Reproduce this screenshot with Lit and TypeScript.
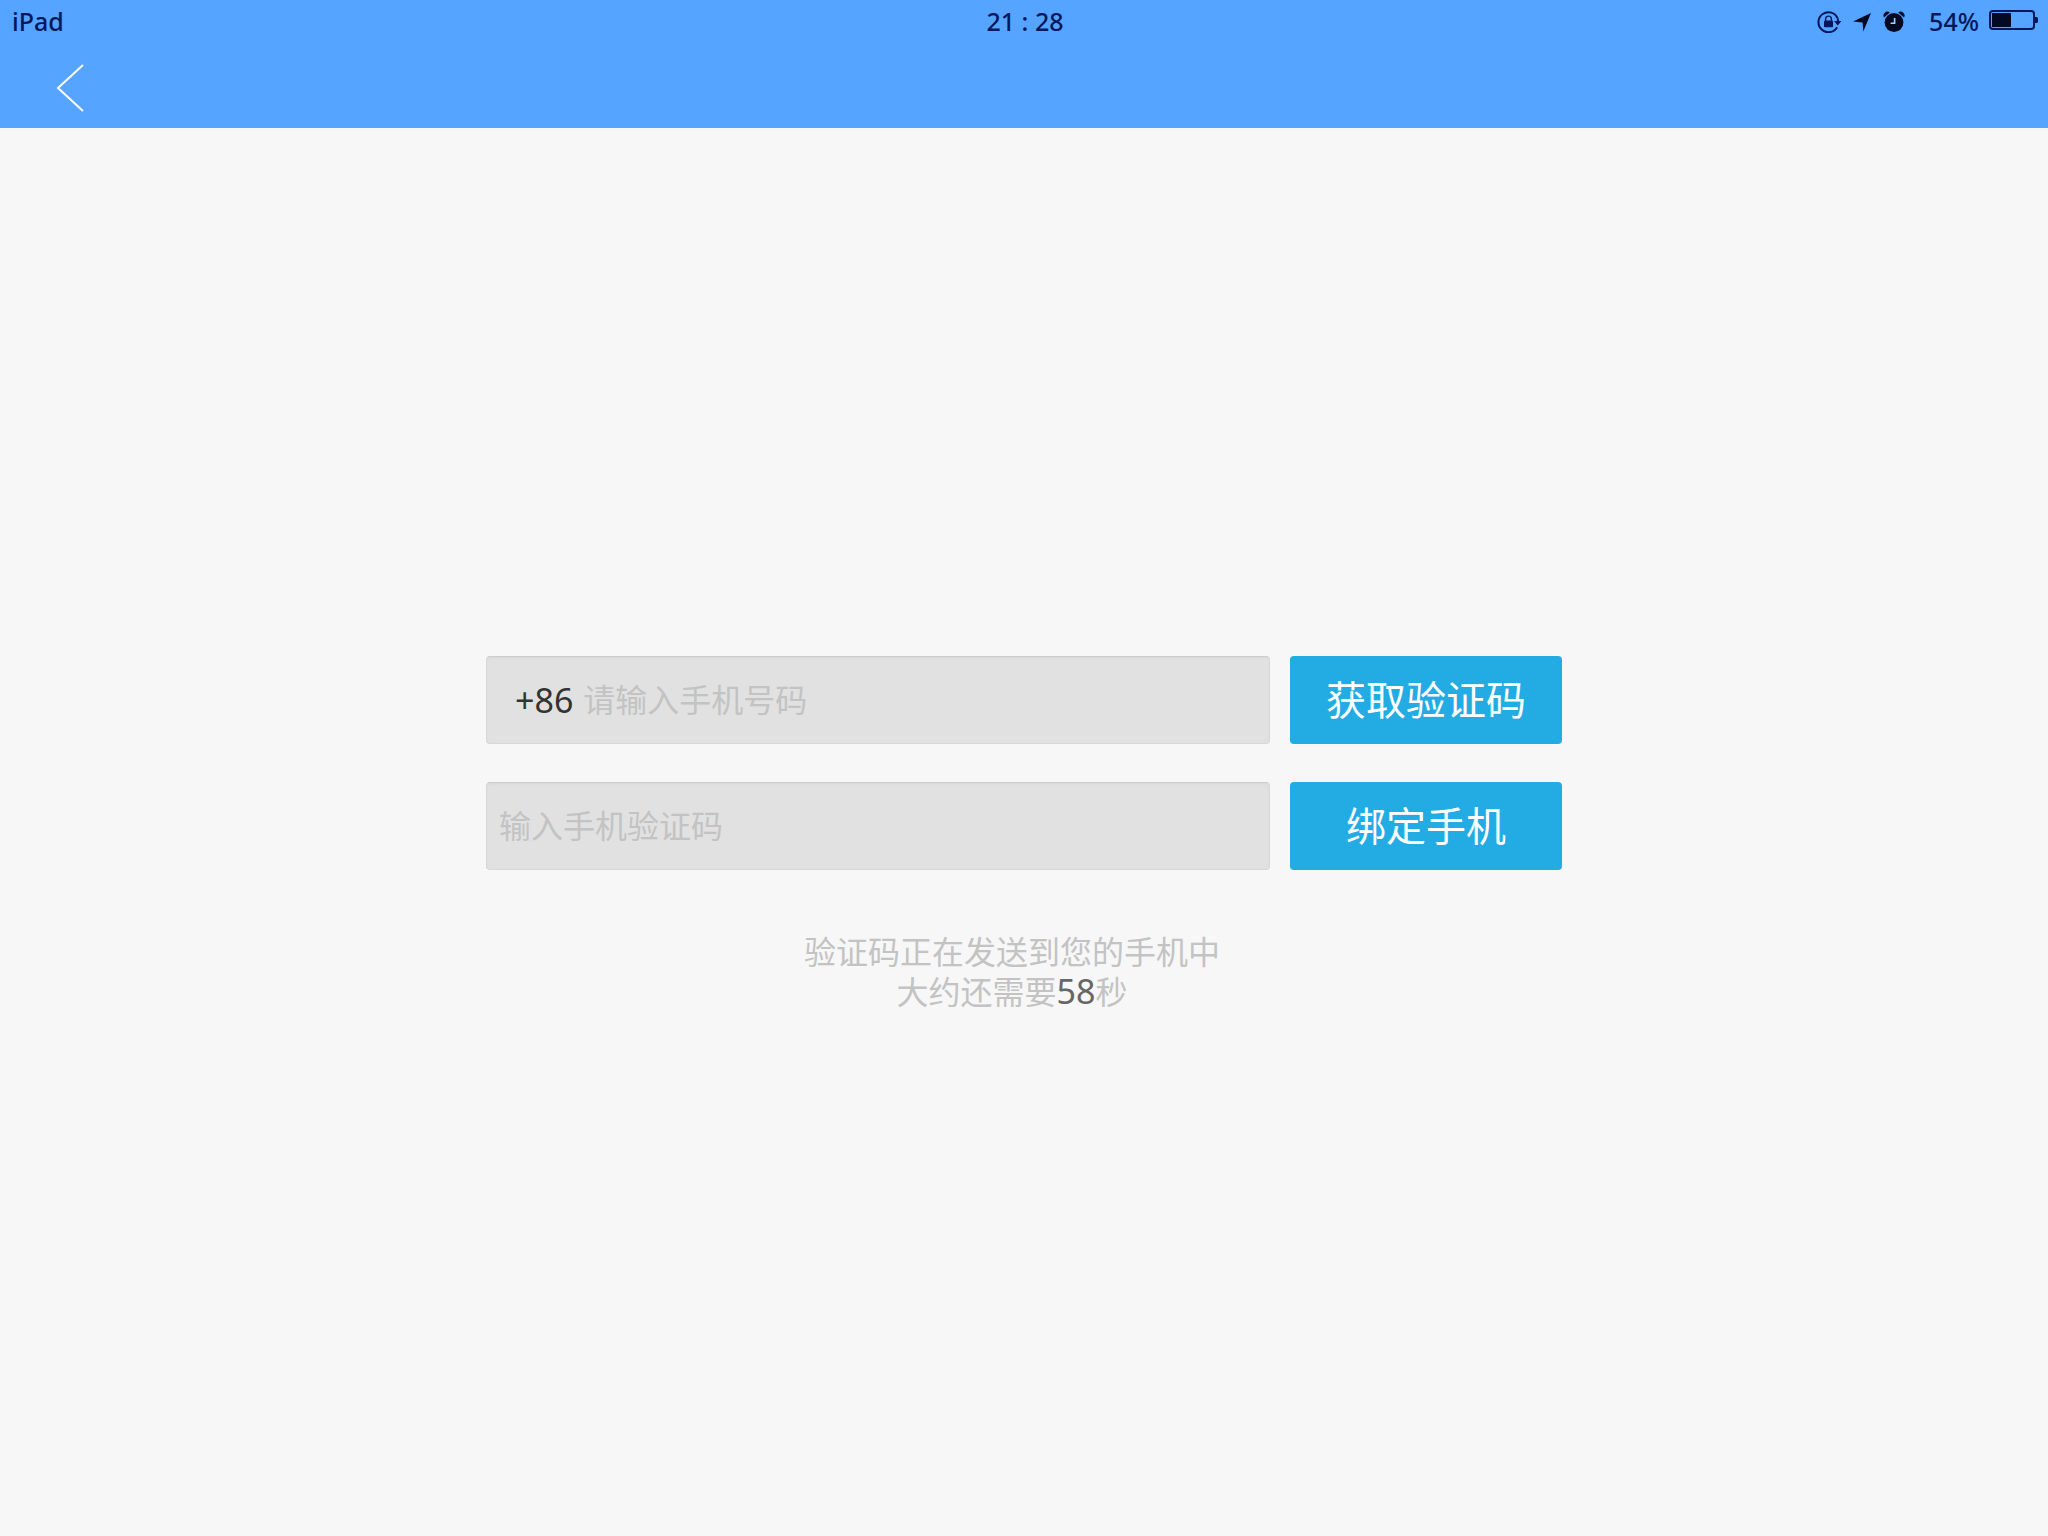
import { LitElement, html, css } from "lit";
import { customElement, property, state } from "lit/decorators.js";

@customElement("status-bar")
class StatusBar extends LitElement {
  @property() device = "iPad";
  @property() time = "21 : 28";
  @property({ type: Number }) battery = 54;

  static styles = css`
    :host {
      display: grid;
      grid-template-columns: 1fr auto 1fr;
      align-items: center;
      height: 42px;
      padding: 0 10px 0 12px;
      color: #04175c;
      font: 500 25px/32px "Noto Sans", "Noto Sans CJK SC", sans-serif;
    }
    .right {
      display: flex;
      justify-content: flex-end;
      align-items: center;
    }
    .icons {
      display: flex;
      gap: 12px;
      margin-right: 24px;
    }
    .percent {
      margin-right: 10px;
    }
    svg {
      display: block;
    }
  `;

  render() {
    const level = Math.round((this.battery / 100) * 36);
    return html`
      <span>${this.device}</span>
      <span>${this.time}</span>
      <div class="right">
        <div class="icons">
          <svg width="24" height="24" viewBox="0 0 24 24" aria-hidden="true">
            <path d="M20.1 18.2A10 10 0 1 1 20.7 9.5" fill="none" stroke="#04175c" stroke-width="2" />
            <path d="M20.7 9.5L21.2 13" stroke="#04175c" stroke-width="2" />
            <path d="M17 12h7.5L20.8 16.5z" fill="#04175c" />
            <path d="M8.6 12V10a2.9 2.9 0 0 1 5.8 0v2" fill="none" stroke="#04175c" stroke-width="1.4" />
            <rect x="7" y="11.5" width="9" height="6.8" rx="1" fill="#04175c" />
          </svg>
          <svg width="18" height="24" viewBox="0 0 18 24" aria-hidden="true">
            <path d="M18 4L10.3 22.5 9.6 13.4 0 12.6z" fill="#020a24" />
          </svg>
          <svg width="22" height="24" viewBox="0 0 22 24" aria-hidden="true">
            <circle cx="11" cy="13.5" r="9.4" fill="#020a24" />
            <path d="M1 8.6A4 4 0 0 1 6.8 3.4z" fill="#020a24" />
            <path d="M21 8.6A4 4 0 0 0 15.2 3.4z" fill="#020a24" />
            <path d="M11.6 9v5.2H7.6" fill="none" stroke="#a9cfff" stroke-width="1.6" />
          </svg>
        </div>
        <span class="percent">${this.battery}%</span>
        <svg width="49" height="24" viewBox="0 0 49 24" aria-hidden="true">
          <rect x="1" y="2" width="44" height="18" rx="3" fill="none" stroke="#04175c" stroke-width="2" />
          <rect x="3" y="4" width=${level} height="14" fill="#020a24" />
          <path d="M46 8h1.5a1.5 1.5 0 0 1 1.5 1.5v3a1.5 1.5 0 0 1-1.5 1.5H46z" fill="#04175c" />
        </svg>
      </div>
    `;
  }
}

@customElement("app-root")
class AppRoot extends LitElement {
  @state() private seconds = 58;

  static styles = css`
    :host {
      display: flex;
      flex-direction: column;
      min-height: 100vh;
      background: #f7f7f7;
      font-family: "Noto Sans", "Noto Sans CJK SC", sans-serif;
    }
    .header {
      background: #55a4ff;
    }
    .nav {
      display: flex;
      height: 86px;
      padding: 0 40px;
    }
    .back {
      display: flex;
      align-items: center;
      padding: 6px 16px 0;
      border: 0;
      background: none;
    }
    .main {
      flex: 1;
      display: flex;
      flex-direction: column;
      align-items: center;
      justify-content: center;
      padding: 2px 24px 0;
    }
    .form {
      display: grid;
      grid-template-columns: 1fr 272px;
      gap: 38px 20px;
      width: 100%;
      max-width: 1076px;
    }
    .field {
      display: flex;
      align-items: center;
      box-sizing: border-box;
      height: 88px;
      padding: 0 12px;
      border: 1px solid #d8d8d8;
      border-top-color: #cdcdcd;
      border-radius: 4px;
      background: #e1e1e1;
      box-shadow: inset 0 1px 2px #d8d8d8;
    }
    .field.phone {
      padding-left: 28px;
    }
    .prefix {
      margin-right: 10px;
      color: #333;
      font-size: 34px;
      line-height: 48px;
    }
    .input {
      flex: 1;
      min-width: 0;
      height: 48px;
      padding: 0 0 4px;
      border: 0;
      outline: 0;
      background: none;
      color: #333;
      font: 32px/48px "Noto Sans CJK SC", sans-serif;
    }
    .input::placeholder {
      color: #c3c3c3;
      opacity: 1;
    }
    .action {
      height: 88px;
      padding: 0 0 4px;
      border: 0;
      border-radius: 4px;
      background: #23ace4;
      color: #fff;
      font: 40px/56px "Noto Sans CJK SC", sans-serif;
    }
    .message {
      margin: 60px 0 0;
      padding-right: 24px;
      color: #c3c3c3;
      font: 32px/40px "Noto Sans CJK SC", sans-serif;
      text-align: center;
    }
    .line {
      display: block;
      height: 40px;
    }
    .count {
      color: #666;
      font: 34px/40px "Noto Sans", sans-serif;
    }
  `;

  render() {
    return html`
      <header class="header">
        <status-bar></status-bar>
        <nav class="nav">
          <button class="back" type="button" aria-label="返回">
            <svg width="28" height="48" viewBox="0 0 28 48" fill="none" stroke="#fff" stroke-width="2" aria-hidden="true">
              <path d="M27 1L2 24l25 23" />
            </svg>
          </button>
        </nav>
      </header>
      <main class="main">
        <form class="form" @submit=${(e: Event) => e.preventDefault()}>
          <div class="field phone">
            <label class="prefix" for="phone">+86</label>
            <input class="input" id="phone" type="tel" placeholder="请输入手机号码" />
          </div>
          <button class="action" type="button">获取验证码</button>
          <div class="field">
            <input class="input" id="code" type="text" inputmode="numeric" aria-label="输入手机验证码" placeholder="输入手机验证码" />
          </div>
          <button class="action" type="submit">绑定手机</button>
        </form>
        <p class="message">
          <span class="line">验证码正在发送到您的手机中</span>
          <span class="line">大约还需要<span class="count">${this.seconds}</span>秒</span>
        </p>
      </main>
    `;
  }
}
